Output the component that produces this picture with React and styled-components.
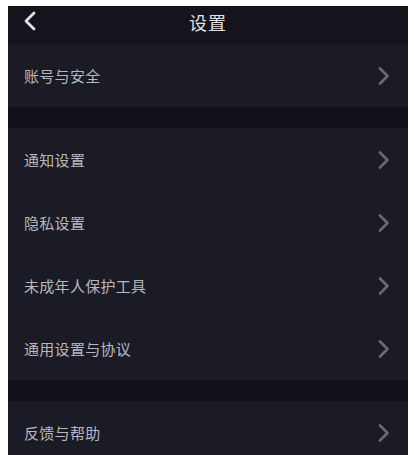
import React from "react";
import styled, { createGlobalStyle } from "styled-components";

const GlobalStyle = createGlobalStyle`
  html, body {
    background: #ffffff;
  }
  body {
    margin: 6px 6px 0 8px;
    font-family: "Noto Sans CJK SC", "Noto Sans", "Liberation Sans", sans-serif;
  }
`;

const Page = styled.div`
  display: flex;
  flex-direction: column;
  background: #111219;
  min-height: 449px;
`;

const Header = styled.div`
  position: relative;
  display: flex;
  align-items: flex-start;
  justify-content: center;
  box-sizing: border-box;
  height: 38px;
  padding-top: 6px;
  background: #13141c;
`;

const BackButton = styled.div`
  position: absolute;
  left: 15px;
  top: 5px;
  display: flex;
  align-items: center;
`;

const Title = styled.h1`
  margin: 0;
  font-size: 18px;
  line-height: 20px;
  font-weight: 400;
  color: #e2e2e4;
  letter-spacing: 1px;
`;

const Section = styled.div`
  display: flex;
  flex-direction: column;
  background: #1a1b24;
  margin-top: ${(p) => (p.$first ? "0" : "21px")};
`;

const Row = styled.div`
  display: flex;
  align-items: center;
  justify-content: space-between;
  height: 63px;
  padding: 0 17px 0 16px;
`;

const Label = styled.span`
  font-size: 15px;
  color: #b8b9be;
  letter-spacing: 0.3px;
`;

const Chevron = () => (
  <svg width="14" height="20" viewBox="0 0 14 20">
    <path
      d="M3 2.5 L10.5 10 L3 17.5"
      fill="none"
      stroke="#6a6b72"
      strokeWidth="2.6"
      strokeLinecap="round"
      strokeLinejoin="round"
    />
  </svg>
);

const BackArrow = () => (
  <svg width="14" height="20" viewBox="0 0 14 20">
    <path
      d="M11 2 L3 10 L11 18"
      fill="none"
      stroke="#e4e4e6"
      strokeWidth="2.8"
      strokeLinecap="round"
      strokeLinejoin="round"
    />
  </svg>
);

const sections = [
  ["账号与安全"],
  ["通知设置", "隐私设置", "未成年人保护工具", "通用设置与协议"],
  ["反馈与帮助"],
];

export default function App() {
  return (
    <>
      <GlobalStyle />
      <Page>
        <Header>
          <BackButton>
            <BackArrow />
          </BackButton>
          <Title>设置</Title>
        </Header>
        {sections.map((items, i) => (
          <Section key={i} $first={i === 0}>
            {items.map((label) => (
              <Row key={label}>
                <Label>{label}</Label>
                <Chevron />
              </Row>
            ))}
          </Section>
        ))}
      </Page>
    </>
  );
}
